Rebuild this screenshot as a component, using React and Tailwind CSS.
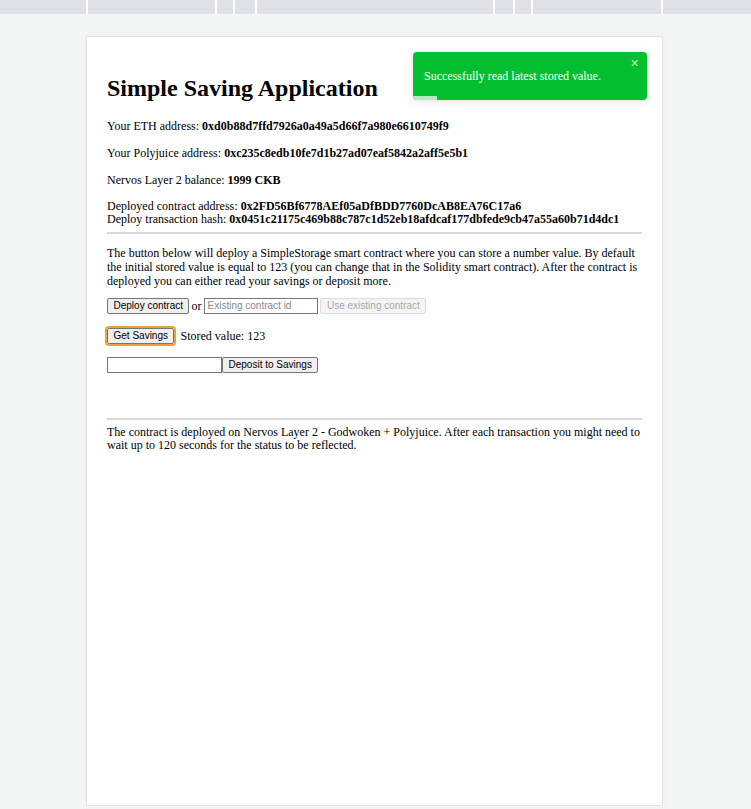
import React from 'react';

const serif = { fontFamily: '"Liberation Serif", "Times New Roman", serif' };
const sans = { fontFamily: '"Liberation Sans", Arial, sans-serif' };

const Btn = ({ children, disabled, focused, className = '' }) => (
  <button
    disabled={disabled}
    className={`h-[16px] px-[5.5px] leading-none text-[10px] rounded-[2px] border ${
      disabled
        ? 'border-[#dcdcdc] bg-[#f4f4f4] text-[#a9a9a9]'
        : 'border-[#767676] bg-[#efefef] text-black'
    } ${focused ? 'outline-2 outline-[#e9a23b] outline-offset-0' : ''} ${className}`}
    style={sans}
  >
    {children}
  </button>
);

const TextInput = ({ placeholder, className = '' }) => (
  <input
    type="text"
    placeholder={placeholder}
    className={`h-[16px] px-[2px] text-[10px] border border-[#767676] bg-white placeholder:text-[#8a8a8a] ${className}`}
    style={sans}
  />
);

const TopStrip = () => (
  <div className="flex h-[14px] bg-[#dee1e6]">
    <div className="w-[86px]" />
    <div className="w-[129px] border-l-2 border-white" />
    <div className="w-[18px] border-l-2 border-white" />
    <div className="w-[22px] border-l-2 border-white" />
    <div className="w-[238px] border-l-2 border-white" />
    <div className="w-[20px] border-l-2 border-white" />
    <div className="w-[18px] border-l-2 border-white" />
    <div className="w-[130px] border-l-2 border-white" />
    <div className="flex-1 border-l-2 border-white" />
  </div>
);

export default function App() {
  return (
    <div className="min-h-screen bg-[#f4f6f6]" style={serif}>
      <TopStrip />
      <div className="pt-[22px] pl-[86px]">
        <div className="relative w-[577px] min-h-[770px] bg-white border border-[#e3e3e3] px-[20px] pt-[22px] text-[12px] text-black leading-[14px] shadow-[0_0_12px_rgba(0,0,0,0.03)]">
          <h1 className="text-[24px] font-bold leading-[1.15] my-[16px]">Simple Saving Application</h1>

          <p className="my-[13px]">Your ETH address: <b>0xd0b88d7ffd7926a0a49a5d66f7a980e6610749f9</b></p>
          <p className="my-[13px]">Your Polyjuice address: <b>0xc235c8edb10fe7d1b27ad07eaf5842a2aff5e5b1</b></p>
          <p className="my-[13px]">Nervos Layer 2 balance: <b>1999 CKB</b></p>
          <p className="mt-[13px] leading-[13px]">
            Deployed contract address: <b>0x2FD56Bf6778AEf05aDfBDD7760DcAB8EA76C17a6</b>
            <br />
            Deploy transaction hash: <b>0x0451c21175c469b88c787c1d52eb18afdcaf177dbfede9cb47a55a60b71d4dc1</b>
          </p>
          <hr className="my-[6px] border-t-2 border-[#d9d9d9]" />
          <p className="mt-[12px] mb-[10px]">
            The button below will deploy a SimpleStorage smart contract where you can store a number value. By default
            the initial stored value is equal to 123 (you can change that in the Solidity smart contract). After the contract is
            deployed you can either read your savings or deposit more.
          </p>

          <div className="flex items-center">
            <Btn>Deploy contract</Btn>
            <span className="ml-[2px] mr-[3px]">or</span>
            <TextInput placeholder="Existing contract id" className="w-[114px]" />
            <Btn disabled className="ml-[2px]">Use existing contract</Btn>
          </div>

          <div className="flex items-center mt-[14px]">
            <Btn focused>Get Savings</Btn>
            <span className="ml-[6px]">Stored value: 123</span>
          </div>

          <div className="flex items-center mt-[13px]">
            <TextInput className="w-[115px]" />
            <Btn>Deposit to Savings</Btn>
          </div>

          <hr className="mt-[45px] mb-[6px] border-t-2 border-[#d9d9d9]" />
          <p className="leading-[13px]">
            The contract is deployed on Nervos Layer 2 - Godwoken + Polyjuice. After each transaction you might need to
            wait up to 120 seconds for the status to be reflected.
          </p>

          <div className="absolute left-[326px] top-[15px] w-[234px] h-[48px] rounded-[4px] bg-[#01bf2e] shadow-[0_1px_8px_rgba(0,0,0,0.12)] overflow-hidden">
            <div className="pl-[11px] pt-[17px] text-white text-[12px] leading-[14px]">Successfully read latest stored value.</div>
            <span className="absolute right-[8px] top-[6px] text-[11px] text-white/75 leading-none" style={sans}>✕</span>
            <div className="absolute left-0 bottom-0 w-[24px] h-[4px] bg-white/70" />
          </div>
        </div>
      </div>
    </div>
  );
}
